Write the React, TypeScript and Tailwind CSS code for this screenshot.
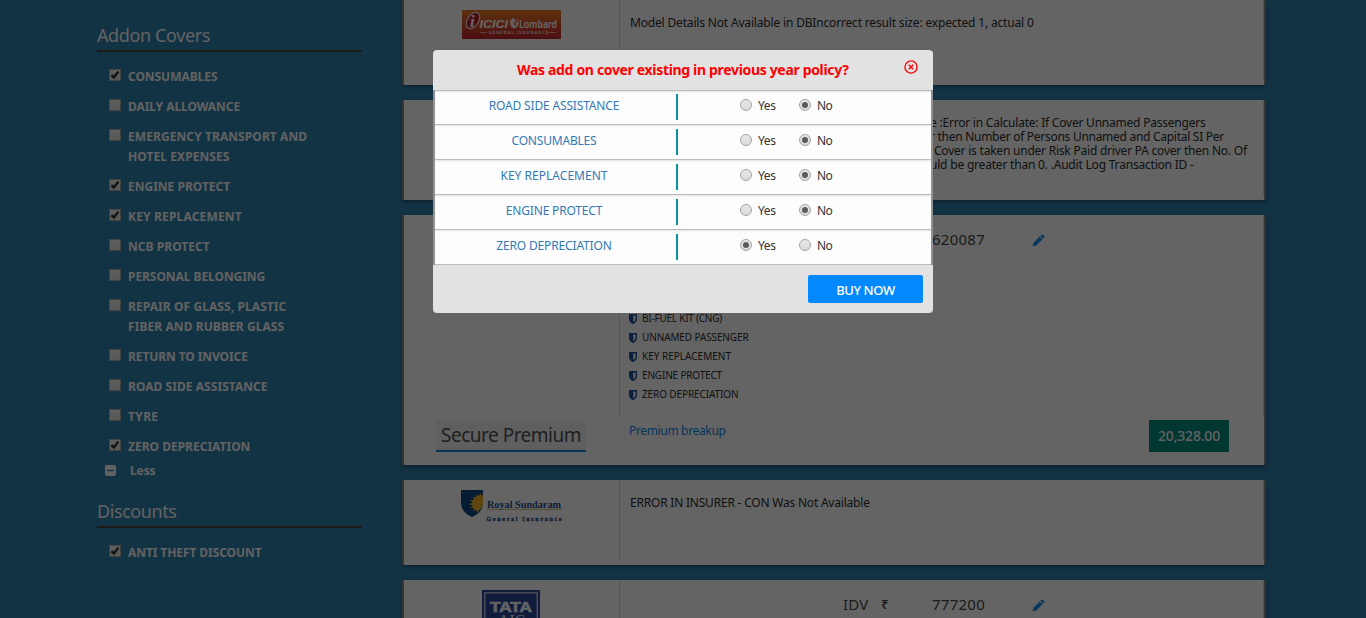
import type { ReactNode } from "react";

type Addon = { lines: string[]; checked?: boolean; spacing: string };

const addons: Addon[] = [
  { lines: ["CONSUMABLES"], checked: true, spacing: "tracking-[-0.05px]" },
  { lines: ["DAILY ALLOWANCE"], spacing: "tracking-[-0.06px]" },
  { lines: ["EMERGENCY TRANSPORT AND", "HOTEL EXPENSES"], spacing: "tracking-[0.08px]" },
  { lines: ["ENGINE PROTECT"], checked: true, spacing: "tracking-normal" },
  { lines: ["KEY REPLACEMENT"], checked: true, spacing: "tracking-[0.17px]" },
  { lines: ["NCB PROTECT"], spacing: "tracking-[0.05px]" },
  { lines: ["PERSONAL BELONGING"], spacing: "tracking-[-0.06px]" },
  { lines: ["REPAIR OF GLASS, PLASTIC", "FIBER AND RUBBER GLASS"], spacing: "tracking-[0.08px]" },
  { lines: ["RETURN TO INVOICE"], spacing: "tracking-[-0.09px]" },
  { lines: ["ROAD SIDE ASSISTANCE"], spacing: "tracking-[0.05px]" },
  { lines: ["TYRE"], spacing: "tracking-[0.35px]" },
  { lines: ["ZERO DEPRECIATION"], checked: true, spacing: "tracking-normal" },
];

const questions = [
  { label: "ROAD SIDE ASSISTANCE", yes: false, spacing: "tracking-[-0.16px]" },
  { label: "CONSUMABLES", yes: false, spacing: "tracking-[-0.19px]" },
  { label: "KEY REPLACEMENT", yes: false, spacing: "tracking-[0.02px]" },
  { label: "ENGINE PROTECT", yes: false, spacing: "tracking-[-0.17px]" },
  { label: "ZERO DEPRECIATION", yes: true, spacing: "tracking-[-0.15px]" },
];

const benefits = [
  { label: "BI-FUEL KIT (CNG)", spacing: "tracking-[-0.23px]" },
  { label: "UNNAMED PASSENGER", spacing: "tracking-[-0.12px]" },
  { label: "KEY REPLACEMENT", spacing: "tracking-normal" },
  { label: "ENGINE PROTECT", spacing: "tracking-[-0.17px]" },
  { label: "ZERO DEPRECIATION", spacing: "tracking-[-0.11px]" },
];

function CheckBox({ checked }: { checked?: boolean }) {
  return (
    <span className="mt-0.5 flex size-3 shrink-0 items-center justify-center border border-[#a8a8a8] bg-linear-to-b from-[#ededed] to-[#dcdcdc]">
      {checked && (
        <svg viewBox="0 0 10 10" className="size-2.5" fill="none" stroke="#333" strokeWidth="2.5">
          <path d="M1.4 5.2 3.9 7.4 8.4 1.6" />
        </svg>
      )}
    </span>
  );
}

function AddonItem({ lines, checked, spacing }: Addon) {
  return (
    <li className="flex gap-[7px]">
      <CheckBox checked={checked} />
      <span className={`text-xs leading-5 font-bold text-[#f5f5f5] ${spacing}`}>
        {lines.map((line) => (
          <span key={line} className="block">{line}</span>
        ))}
      </span>
    </li>
  );
}

function SectionTitle({ children, className }: { children: string; className: string }) {
  return (
    <h2 className={`border-b-2 border-[#4c4540] pb-0.5 text-lg leading-[26px] text-[#f5f5f5] ${className}`}>
      {children}
    </h2>
  );
}

function Radio({ label, on, className }: { label: string; on: boolean; className: string }) {
  return (
    <label className={`flex items-center gap-1.5 text-xs leading-5 text-[#333] ${className}`}>
      <span className="flex size-3 items-center justify-center rounded-full border border-[#a3a3a3] bg-linear-to-b from-[#e8e8e8] to-[#dadada]">
        {on && <span className="size-1.5 rounded-full bg-[#5a5a5a]" />}
      </span>
      <span className="pt-px">{label}</span>
    </label>
  );
}

function Card({ logo, children, className }: { logo: ReactNode; children: ReactNode; className: string }) {
  return (
    <section className={`flex w-[864px] shrink-0 border-x-2 border-[#858585] bg-[#fafafa] shadow-[0_2px_4px_rgba(0,0,0,0.35)] ${className}`}>
      <div className="mb-[5px] w-[216px] shrink-0 border-r border-[#d8d8d8]">{logo}</div>
      <div className="mb-[5px] grow border-r border-[#d8d8d8] pl-2.5">{children}</div>
    </section>
  );
}

function Pencil() {
  return (
    <svg viewBox="0 0 13 13" className="size-[13px]" fill="#0b86e6">
      <path d="M.5 12.5 1.4 8.8 7.7 2.5 10.5 5.3 4.2 11.6Z" />
      <path d="M8.4 1.8 9.5.8Q10.2.3 10.9.9L12.1 2.1Q12.7 2.8 12.2 3.5L11.2 4.6Z" />
      <path d="M2.6 9 8 3.7" stroke="#7fc0f3" strokeWidth=".5" />
      <path d="M1.3 10.4 2.6 11.7" stroke="#fafafa" strokeWidth=".5" />
    </svg>
  );
}

function Shield() {
  return (
    <svg viewBox="0 0 8 10" className="h-2.5 w-2">
      <path d="M.7.8H7.3V5Q7.3 7.6 4 9.3.7 7.6.7 5Z" fill="#fafafa" stroke="#1b5296" strokeWidth="1.4" />
      <path d="M.7.8H4.3V9.2Q.7 7.6.7 5Z" fill="#1b5296" />
    </svg>
  );
}

function IciciLogo() {
  return (
    <svg viewBox="0 0 99 29" className="h-[29px] w-[99px]">
      <defs>
        <linearGradient id="icici" x1="0" y1="0" x2="0" y2="1">
          <stop offset="0" stopColor="#e87b22" />
          <stop offset="1" stopColor="#bd2430" />
        </linearGradient>
      </defs>
      <rect width="99" height="29" fill="url(#icici)" />
      <ellipse cx="11" cy="10.5" rx="5.5" ry="9" transform="rotate(33 11 10.5)" fill="#b51c2b" stroke="#f4e6dc" strokeWidth="1.2" />
      <text x="8" y="17" fontFamily="Liberation Serif, serif" fontWeight="700" fontStyle="italic" fontSize="17" fill="#fff">i</text>
      <text x="17.5" y="17.5" fontFamily="Liberation Sans, sans-serif" fontWeight="700" fontStyle="italic" fontSize="11.5" textLength="28.5" lengthAdjust="spacingAndGlyphs" fill="#fff">ICICI</text>
      <ellipse cx="52.3" cy="13" rx="4.2" ry="5.3" fill="#f6e9e0" />
      <path d="M51.5 7 55 10.5 52.5 13.5 54 15.5" fill="none" stroke="#cf4e29" strokeWidth="1.2" />
      <text x="57" y="17.8" fontFamily="Noto Sans, sans-serif" fontWeight="600" fontSize="9.8" textLength="38" lengthAdjust="spacingAndGlyphs" fill="#fff">Lombard</text>
      <path d="M18 22.5H25M87 22.5H94" stroke="#f3c9a9" strokeWidth=".8" />
      <text x="26.5" y="24" fontFamily="Liberation Sans, sans-serif" fontWeight="700" fontSize="4" textLength="60" fill="#f7d9c4">GENERAL INSURANCE</text>
    </svg>
  );
}

function RoyalLogo() {
  return (
    <svg viewBox="0 0 102 33" className="h-[33px] w-[102px]">
      <path d="M0 0H22V13Q22 22 11 27 0 22 0 13Z" fill="#114684" />
      <path d="M22 4.5 20.5 6 19.2 2.8 18 6.2 15.2 4.2 15.2 7.6 11.8 6.8 13 9.9 8.8 10 11.9 12.6 8 14.2 12 15.2 9.4 18 13 17.7 12 21 15.4 19.4 15.6 22.8 18 20.6Q22 17.5 22 13Z" fill="#edaa25" />
      <path d="M26 19.3H101" stroke="#c9a55d" strokeWidth=".9" />
      <text x="26" y="17.8" fontFamily="Liberation Serif, serif" fontWeight="600" fontSize="11" textLength="74" lengthAdjust="spacingAndGlyphs" fill="#1f4d85">Royal Sundaram</text>
      <text x="25.5" y="30.8" fontFamily="Liberation Serif, serif" fontWeight="700" fontSize="6" textLength="75" stroke="#1f4d85" strokeWidth=".3" fill="#1f4d85">General Insurance</text>
    </svg>
  );
}

function TataLogo() {
  return (
    <svg viewBox="0 0 58 50" className="h-[50px] w-[58px]">
      <rect width="58" height="50" fill="#2c4798" />
      <rect x="2.8" y="2.8" width="52.4" height="44.4" fill="none" stroke="#d6dcec" strokeWidth="1.2" />
      <text x="8" y="22.3" fontFamily="Liberation Sans, sans-serif" fontWeight="700" fontSize="14.5" textLength="42" lengthAdjust="spacingAndGlyphs" stroke="#f2f4fa" strokeWidth=".7" fill="#f2f4fa">TATA</text>
      <text x="16" y="38.5" fontFamily="Liberation Serif, serif" fontSize="20" textLength="28" lengthAdjust="spacingAndGlyphs" fill="#e1e6f3">AIG</text>
    </svg>
  );
}

function Sidebar() {
  return (
    <aside className="w-[265px] shrink-0 pt-[22px]">
      <SectionTitle className="tracking-[-0.38px]">Addon Covers</SectionTitle>
      <ul className="flex flex-col gap-2.5 pt-[15px] pl-3">
        {addons.map((addon) => (
          <AddonItem key={addon.lines[0]} {...addon} />
        ))}
      </ul>
      <div className="mt-[3px] flex h-5 items-center gap-3.5 pl-2 text-xs font-bold text-[#f5f5f5]">
        <svg viewBox="0 0 11 11" className="size-[11px]">
          <rect width="11" height="11" rx="2" fill="#f5f5f5" />
          <path d="M2 5.5H9" stroke="#2f7faa" strokeWidth="1.4" />
        </svg>
        <span className="pt-px tracking-[-0.11px]">Less</span>
      </div>
      <div className="mt-[18px]">
        <SectionTitle className="tracking-[-0.42px]">Discounts</SectionTitle>
        <ul className="pt-[15px] pl-3">
          <AddonItem lines={["ANTI THEFT DISCOUNT"]} checked spacing="tracking-[-0.08px]" />
        </ul>
      </div>
    </aside>
  );
}

function Results() {
  return (
    <main className="flex flex-col gap-[15px]">
      <Card className="h-[85px]" logo={<div className="pt-2.5 pl-[58px]"><IciciLogo /></div>}>
        <p className="pt-[13px] text-xs leading-5 tracking-[-0.17px]">
          Model Details Not Available in DBIncorrect result size: expected 1, actual 0
        </p>
      </Card>

      <Card className="h-[100px]" logo={null}>
        <div className="pt-4 pl-[300px] text-xs leading-3.5 whitespace-nowrap">
          <p className="tracking-[-0.22px]">e :Error in Calculate: If Cover Unnamed Passengers</p>
          <p className="tracking-[-0.28px]">r then Number of Persons Unnamed and Capital SI Per</p>
          <p className="pl-1 tracking-[-0.22px]">Cover is taken under Risk Paid driver PA cover then No. Of</p>
          <p className="tracking-[-0.2px]">uld be greater than 0. .Audit Log Transaction ID -</p>
        </div>
      </Card>

      <section className="flex h-[250px] w-[864px] shrink-0 flex-col border-x-2 border-[#858585] bg-[#fafafa] shadow-[0_2px_4px_rgba(0,0,0,0.35)]">
        <div className="flex h-[201px]">
          <div className="w-[216px] shrink-0 border-r border-[#d8d8d8]" />
          <div className="flex grow flex-col justify-between border-r border-[#d8d8d8] pt-[15px] pb-3 pl-[9px]">
            <div className="flex h-5 items-center pl-[303px] text-[15px] text-[#444]">
              <span className="w-[100px] pb-0.5 tracking-[0.25px]">620087</span>
              <Pencil />
            </div>
            <ul>
              {benefits.map(({ label, spacing }) => (
                <li key={label} className={`flex h-[19px] items-center gap-[5px] text-[10px] ${spacing}`}>
                  <Shield />
                  {label}
                </li>
              ))}
            </ul>
          </div>
        </div>
        <div className="flex items-start pt-1">
          <div className="ml-8 h-8 w-[150px] rounded-t border-b-2 border-[#1583d6] bg-[#eeeeee] pl-[5px] text-[19px] leading-[30px] tracking-[-0.5px] whitespace-nowrap text-[#505050]">
            Secure Premium
          </div>
          <span className="ml-[43px] pt-px text-xs leading-5 tracking-[-0.34px] text-[#0b86e6]">Premium breakup</span>
          <div className="mr-[35px] ml-auto h-8 w-20 bg-[#00897b] text-center text-sm leading-8 font-medium tracking-[-0.19px] text-[#f5f5f5]">
            20,328.00
          </div>
        </div>
      </section>

      <Card className="h-[85px]" logo={<div className="pt-2.5 pl-[57px]"><RoyalLogo /></div>}>
        <p className="pt-[13px] text-xs leading-5 tracking-[-0.21px]">ERROR IN INSURER - CON Was Not Available</p>
      </Card>

      <Card className="h-[250px]" logo={<div className="pt-2.5 pl-[78px]"><TataLogo /></div>}>
        <div className="mt-[15px] flex h-5 items-center pl-[213px] text-[15px] text-[#444]">
          <span className="w-[38px] pb-0.5 tracking-[0.2px]">IDV</span>
          <span className="w-[51px] text-[13px] font-semibold">₹</span>
          <span className="w-[100px] pb-0.5 tracking-[0.25px]">777200</span>
          <Pencil />
        </div>
      </Card>
    </main>
  );
}

function Dialog() {
  return (
    <div role="dialog" className="absolute top-[50px] left-[433px] flex h-[263px] w-[500px] flex-col overflow-hidden rounded bg-[#e2e2e2]">
      <header className="flex h-10 shrink-0 items-center">
        <h1 className="pl-[84px] text-sm font-bold tracking-[-0.33px] whitespace-nowrap text-[#ff0000]">
          Was add on cover existing in previous year policy?
        </h1>
        <svg viewBox="0 0 14 14" className="mr-[15px] mb-1.5 ml-auto size-3.5" fill="none" stroke="#f80d12">
          <circle cx="7" cy="7" r="6.1" strokeWidth="1.4" />
          <path d="M4.8 4.8 9.2 9.2M9.2 4.8 4.8 9.2" strokeWidth="1.6" />
        </svg>
      </header>
      <div className="border-x-2 border-[#919191]">
        {questions.map(({ label, yes, spacing }, i) => (
          <div
            key={label}
            className={`flex h-[35px] border-b border-b-[#bcbaba] bg-[#fdfdfd] shadow-[inset_0_2px_2px_-1px_rgba(0,0,0,0.1)] ${i === 0 ? "border-t border-t-[#bcbaba]" : ""}`}
          >
            <div className={`h-[26px] w-[243px] shrink-0 border-r-2 border-[#0a949f] pr-[3px] text-center text-xs leading-6 text-[#337ab7] ${i === 0 ? "mt-[3px]" : "mt-1"} ${spacing}`}>
              {label}
            </div>
            <div className={`flex h-5 pl-[62px] ${i === 0 ? "mt-1" : "mt-[5px]"}`}>
              <Radio label="Yes" on={yes} className="w-[59px] tracking-[-0.4px]" />
              <Radio label="No" on={!yes} className="tracking-[-0.7px]" />
            </div>
          </div>
        ))}
      </div>
      <footer className="flex grow items-start justify-end pt-2.5 pr-2.5">
        <button className="h-7 w-[115px] rounded-xs bg-[#0389ff] pt-0.5 text-[13px] leading-[26px] font-medium tracking-[-0.42px] text-white">
          BUY NOW
        </button>
      </footer>
    </div>
  );
}

export default function App() {
  return (
    <div className="relative h-[618px] w-[1366px] overflow-hidden bg-[#2f7faa] font-['Noto_Sans',sans-serif] text-[#2c2c2c]">
      <div className="flex h-full gap-10 overflow-hidden pl-[97px]">
        <Sidebar />
        <Results />
      </div>
      <div className="absolute inset-0 bg-black/60" />
      <Dialog />
    </div>
  );
}
